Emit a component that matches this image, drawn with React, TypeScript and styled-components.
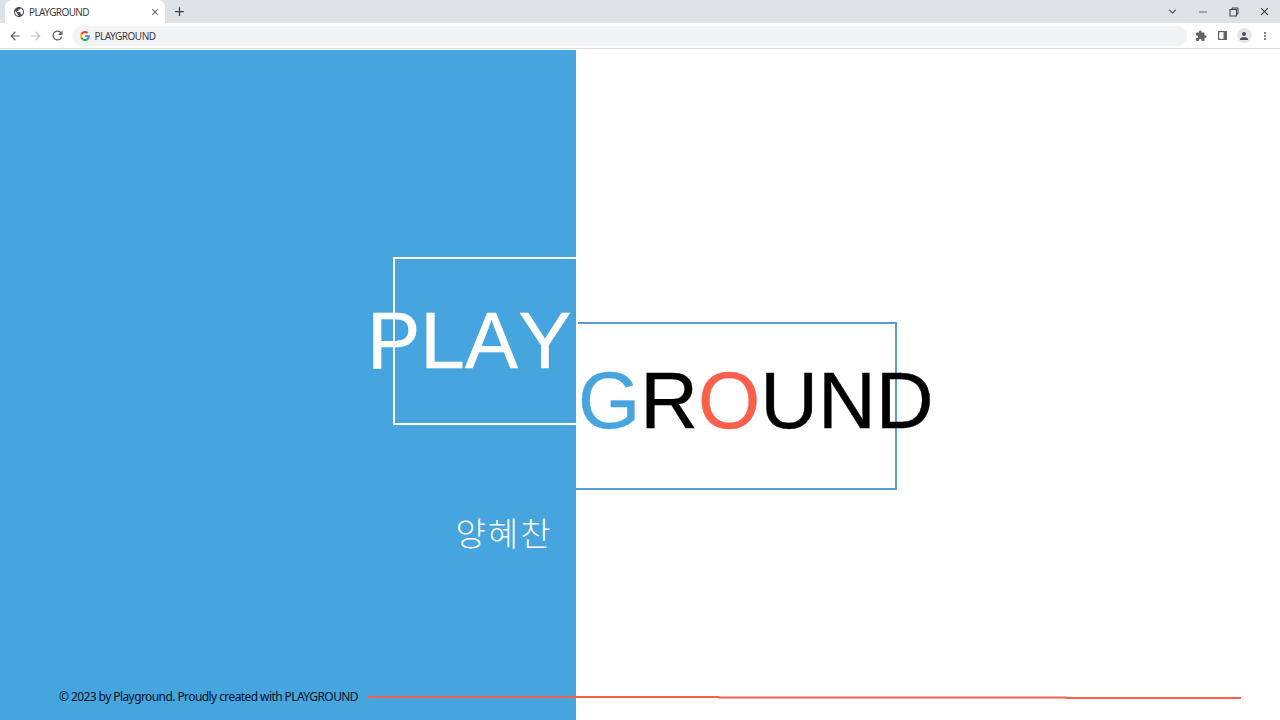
import React from 'react'
import styled, { createGlobalStyle } from 'styled-components'
import {
  MdAdd,
  MdArrowBack,
  MdArrowForward,
  MdClose,
  MdExtension,
  MdKeyboardArrowDown,
  MdMoreVert,
  MdPerson,
  MdPublic,
  MdRefresh,
} from 'react-icons/md'

const BLUE = '#46a4de'
const LINE_BLUE = '#5b9bd5'
const TOMATO = '#fa5f4b'

const GlobalStyle = createGlobalStyle`
  html, body {
    margin: 0;
    height: 720px;
    overflow: hidden;
    background: #fff;
  }
  body {
    font-family: "Noto Sans", "Noto Sans CJK KR", sans-serif;
  }
`

const Page = styled.div`
  position: relative;
  display: flex;
  flex-direction: column;
  width: 1280px;
  height: 720px;
`

const TabStrip = styled.div`
  display: flex;
  align-items: flex-end;
  height: 23px;
  padding-left: 5px;
  background: #dee1e6;
`

const Tab = styled.div`
  display: flex;
  align-items: center;
  width: 160px;
  height: 23px;
  box-sizing: border-box;
  padding: 0 5px 0 8px;
  border-radius: 7px 7px 0 0;
  background: #fff;
  color: #3c4043;
`

const TabTitle = styled.span`
  flex: 1;
  margin-left: 4px;
  font-size: 10px;
  letter-spacing: -0.6px;
  line-height: 12px;
`

const NewTab = styled.div`
  display: flex;
  align-items: center;
  justify-content: center;
  width: 29px;
  height: 23px;
  color: #3c4043;
`

const WindowButtons = styled.div`
  display: flex;
  align-items: center;
  height: 23px;
  margin-left: auto;
  color: #5f6368;
`

const WindowButton = styled.div<{ $width?: number }>`
  display: flex;
  align-items: center;
  justify-content: center;
  width: ${p => p.$width ?? 31}px;
  height: 23px;
`

const Toolbar = styled.div`
  display: flex;
  align-items: center;
  height: 25px;
  padding: 0 4px 0 4px;
  background: #fff;
  border-bottom: 1px solid #dadce0;
`

const NavButton = styled.div<{ $dim?: boolean }>`
  display: flex;
  align-items: center;
  justify-content: center;
  width: 21.5px;
  height: 24px;
  color: ${p => (p.$dim ? '#bdc1c6' : '#5f6368')};
`

const ReloadButton = styled(NavButton)`
  width: 20px;
  margin-right: 1.5px;
`

const AddressBar = styled.div`
  display: flex;
  align-items: center;
  width: 1115px;
  height: 20px;
  margin: 0 4px 0 3px;
  padding-left: 8px;
  box-sizing: border-box;
  border-radius: 10px;
  background: #f1f3f4;
  color: #3c4043;
  font-size: 10px;
  letter-spacing: -0.5px;
`

const AddressText = styled.span`
  margin-left: 5px;
`

const Avatar = styled.div`
  display: flex;
  align-items: center;
  justify-content: center;
  width: 15px;
  height: 15px;
  margin: 0 3px;
  border-radius: 50%;
  background: #e4e6ea;
  color: #4a5068;
`

const Spacer = styled.div`
  height: 1px;
  background: #fff;
`

const Split = styled.main`
  display: flex;
  flex: 1;
  min-height: 0;
`

const LeftPanel = styled.section`
  display: flex;
  flex-direction: column;
  align-items: flex-end;
  width: 576px;
  padding-top: 207px;
  box-sizing: border-box;
  background: ${BLUE};
`

const RightPanel = styled.section`
  flex: 1;
  padding-top: 272px;
  background: #fff;
`

const PlayFrame = styled.div`
  position: relative;
  width: 181px;
  height: 164px;
  border: 2px solid #fff;
  border-right: none;
`

const GroundFrame = styled.div`
  position: relative;
  width: 319px;
  height: 164px;
  border-right: 2px solid ${LINE_BLUE};
  border-bottom: 2px solid ${LINE_BLUE};
  padding-top: 2px;

  &::before {
    content: '';
    position: absolute;
    top: 0;
    left: 2px;
    right: 0;
    height: 2px;
    background: ${LINE_BLUE};
  }
`

const BigWord = styled.h1<{ $dark?: boolean }>`
  position: absolute;
  margin: 0;
  font-family: "Liberation Sans", Arial, sans-serif;
  font-size: 80px;
  font-weight: 400;
  font-kerning: none;
  line-height: 1;
  white-space: nowrap;
  -webkit-text-stroke: 0.4px currentColor;
  color: ${p => (p.$dark ? '#000' : '#fff')};
`

const PlayWord = styled(BigWord)`
  top: 42px;
  left: -28px;
`

const GroundWord = styled(BigWord)`
  top: 39px;
  left: 2px;
`

const Letter = styled.span<{ $color: string }>`
  color: ${p => p.$color};
`

const Name = styled.div`
  margin: 85px 23.5px 0 0;
  color: #fff;
  font-family: "Noto Sans CJK KR", sans-serif;
  font-size: 33px;
  font-weight: 300;
  letter-spacing: 2px;
  line-height: 44px;
`

const Footer = styled.footer`
  align-self: flex-start;
  margin: auto 0 14px 59px;
  color: #08141e;
  font-size: 12px;
  letter-spacing: -0.58px;
  line-height: 18px;
  white-space: nowrap;
`

const FooterLine = styled.svg`
  position: absolute;
  left: 0;
  top: 690px;
  pointer-events: none;
`

const GoogleG = () => (
  <svg width="10" height="10" viewBox="0 0 48 48">
    <path fill="#EA4335" d="M24 9.5c3.5 0 6.7 1.2 9.2 3.6l6.9-6.9C35.9 2.4 30.5 0 24 0 14.6 0 6.5 5.4 2.6 13.2l8 6.2C12.5 13.7 17.8 9.5 24 9.5z" />
    <path fill="#4285F4" d="M46.9 24.5c0-1.6-.1-3.1-.4-4.5H24v9h12.9c-.6 3-2.2 5.5-4.7 7.2l7.7 6c4.5-4.2 7-10.3 7-17.7z" />
    <path fill="#FBBC05" d="M10.5 28.6c-.5-1.4-.8-3-.8-4.6s.3-3.2.8-4.6l-8-6.2C.9 16.5 0 20.1 0 24s.9 7.5 2.6 10.8l7.9-6.2z" />
    <path fill="#34A853" d="M24 48c6.5 0 11.9-2.1 15.9-5.8l-7.7-6c-2.2 1.5-4.9 2.3-8.2 2.3-6.2 0-11.5-4.2-13.4-9.9l-8 6.2C6.5 42.6 14.6 48 24 48z" />
  </svg>
)

const RestoreIcon = () => (
  <svg width="10" height="10" viewBox="0 0 10 10" fill="none" stroke="#3c4043" strokeWidth="1">
    <rect x="1" y="2.5" width="6.5" height="6.5" />
    <path d="M3 2.5V1h6v6H7.5" />
  </svg>
)

const PanelIcon = () => (
  <svg width="11" height="11" viewBox="0 0 11 11">
    <rect x="1" y="1" width="9" height="9" fill="#5f6368" />
    <rect x="2.2" y="2.2" width="4.3" height="6.6" fill="#fff" />
  </svg>
)

function App() {
  return (
    <Page>
      <GlobalStyle />
      <TabStrip>
        <Tab>
          <MdPublic size={12} color="#4a4d52" />
          <TabTitle>PLAYGROUND</TabTitle>
          <MdClose size={10} />
        </Tab>
        <NewTab><MdAdd size={15} /></NewTab>
        <WindowButtons>
          <WindowButton $width={29}><MdKeyboardArrowDown size={15} /></WindowButton>
          <WindowButton><svg width="10" height="10" viewBox="0 0 10 10"><path d="M1 5h8" stroke="#5f6368" /></svg></WindowButton>
          <WindowButton><RestoreIcon /></WindowButton>
          <WindowButton><MdClose size={13} color="#3c4043" /></WindowButton>
        </WindowButtons>
      </TabStrip>
      <Toolbar>
        <NavButton><MdArrowBack size={14} /></NavButton>
        <NavButton $dim><MdArrowForward size={14} /></NavButton>
        <ReloadButton><MdRefresh size={15} /></ReloadButton>
        <AddressBar>
          <GoogleG />
          <AddressText>PLAYGROUND</AddressText>
        </AddressBar>
        <NavButton><MdExtension size={12} /></NavButton>
        <NavButton><PanelIcon /></NavButton>
        <Avatar><MdPerson size={12} /></Avatar>
        <NavButton><MdMoreVert size={12} /></NavButton>
      </Toolbar>
      <Spacer />
      <Split>
        <LeftPanel>
          <PlayFrame>
            <PlayWord>PLAY</PlayWord>
          </PlayFrame>
          <Name>양혜찬</Name>
          <Footer>© 2023 by Playground. Proudly created with PLAYGROUND</Footer>
        </LeftPanel>
        <RightPanel>
          <GroundFrame>
            <GroundWord $dark>
              <Letter $color={BLUE}>G</Letter>R<Letter $color={TOMATO}>O</Letter>UND
            </GroundWord>
          </GroundFrame>
        </RightPanel>
      </Split>
      <FooterLine width="1280" height="14" viewBox="0 0 1280 14">
        <path d="M368 7L718 7L719 7.5L1066 7.5L1067 8L1241 8" fill="none" stroke={TOMATO} strokeWidth="2" />
      </FooterLine>
    </Page>
  )
}

export default App
